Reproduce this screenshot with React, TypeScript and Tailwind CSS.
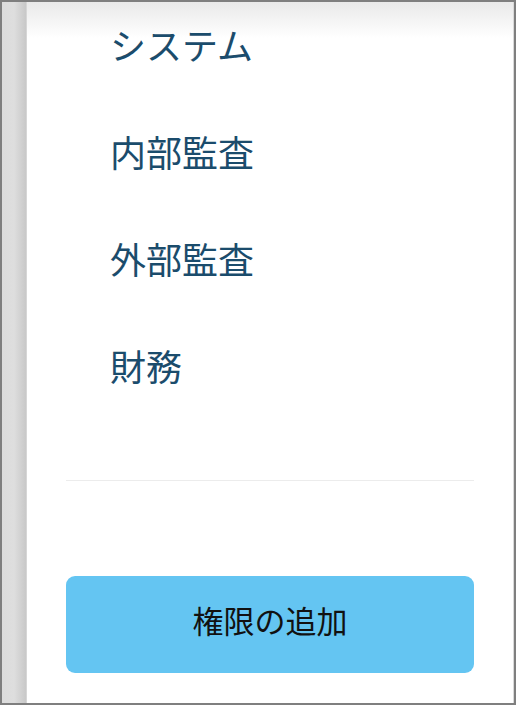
import React from "react";

const items = ["システム", "内部監査", "外部監査", "財務"];

export default function App() {
  return (
    <div
      className="w-[516px] h-[705px] border-2 border-[#7f7f7f] flex overflow-hidden bg-white"
      style={{ fontFamily: '"Noto Sans CJK JP", "Noto Sans", sans-serif' }}
    >
      <div className="w-[25px] h-full bg-gradient-to-r from-[#dcdcdc] via-[#dedede] to-[#c8c8c8] border-r border-[#d6d6d6]" />
      <div className="relative flex-1 h-full bg-white border-r border-[#d9d9d9]">
        <div className="absolute left-0 right-0 top-0 h-[36px] bg-gradient-to-b from-[#e9e9e9] to-white" />
        <div className="relative flex flex-col px-[39px]">
          <div className="flex flex-col gap-[71px] pt-[24px] pl-[44px]">
            {items.map((t) => (
              <div key={t} className="text-[36px] leading-[36px] text-[#1b4c6c]">
                {t}
              </div>
            ))}
          </div>
          <div className="mt-[97px] h-px bg-[#ececec]" />
          <button className="mt-[95px] h-[97px] w-full rounded-[9px] bg-[#64c5f2] text-[31px] text-[#111] flex items-center justify-center pb-[8px]">
            権限の追加
          </button>
        </div>
      </div>
    </div>
  );
}
